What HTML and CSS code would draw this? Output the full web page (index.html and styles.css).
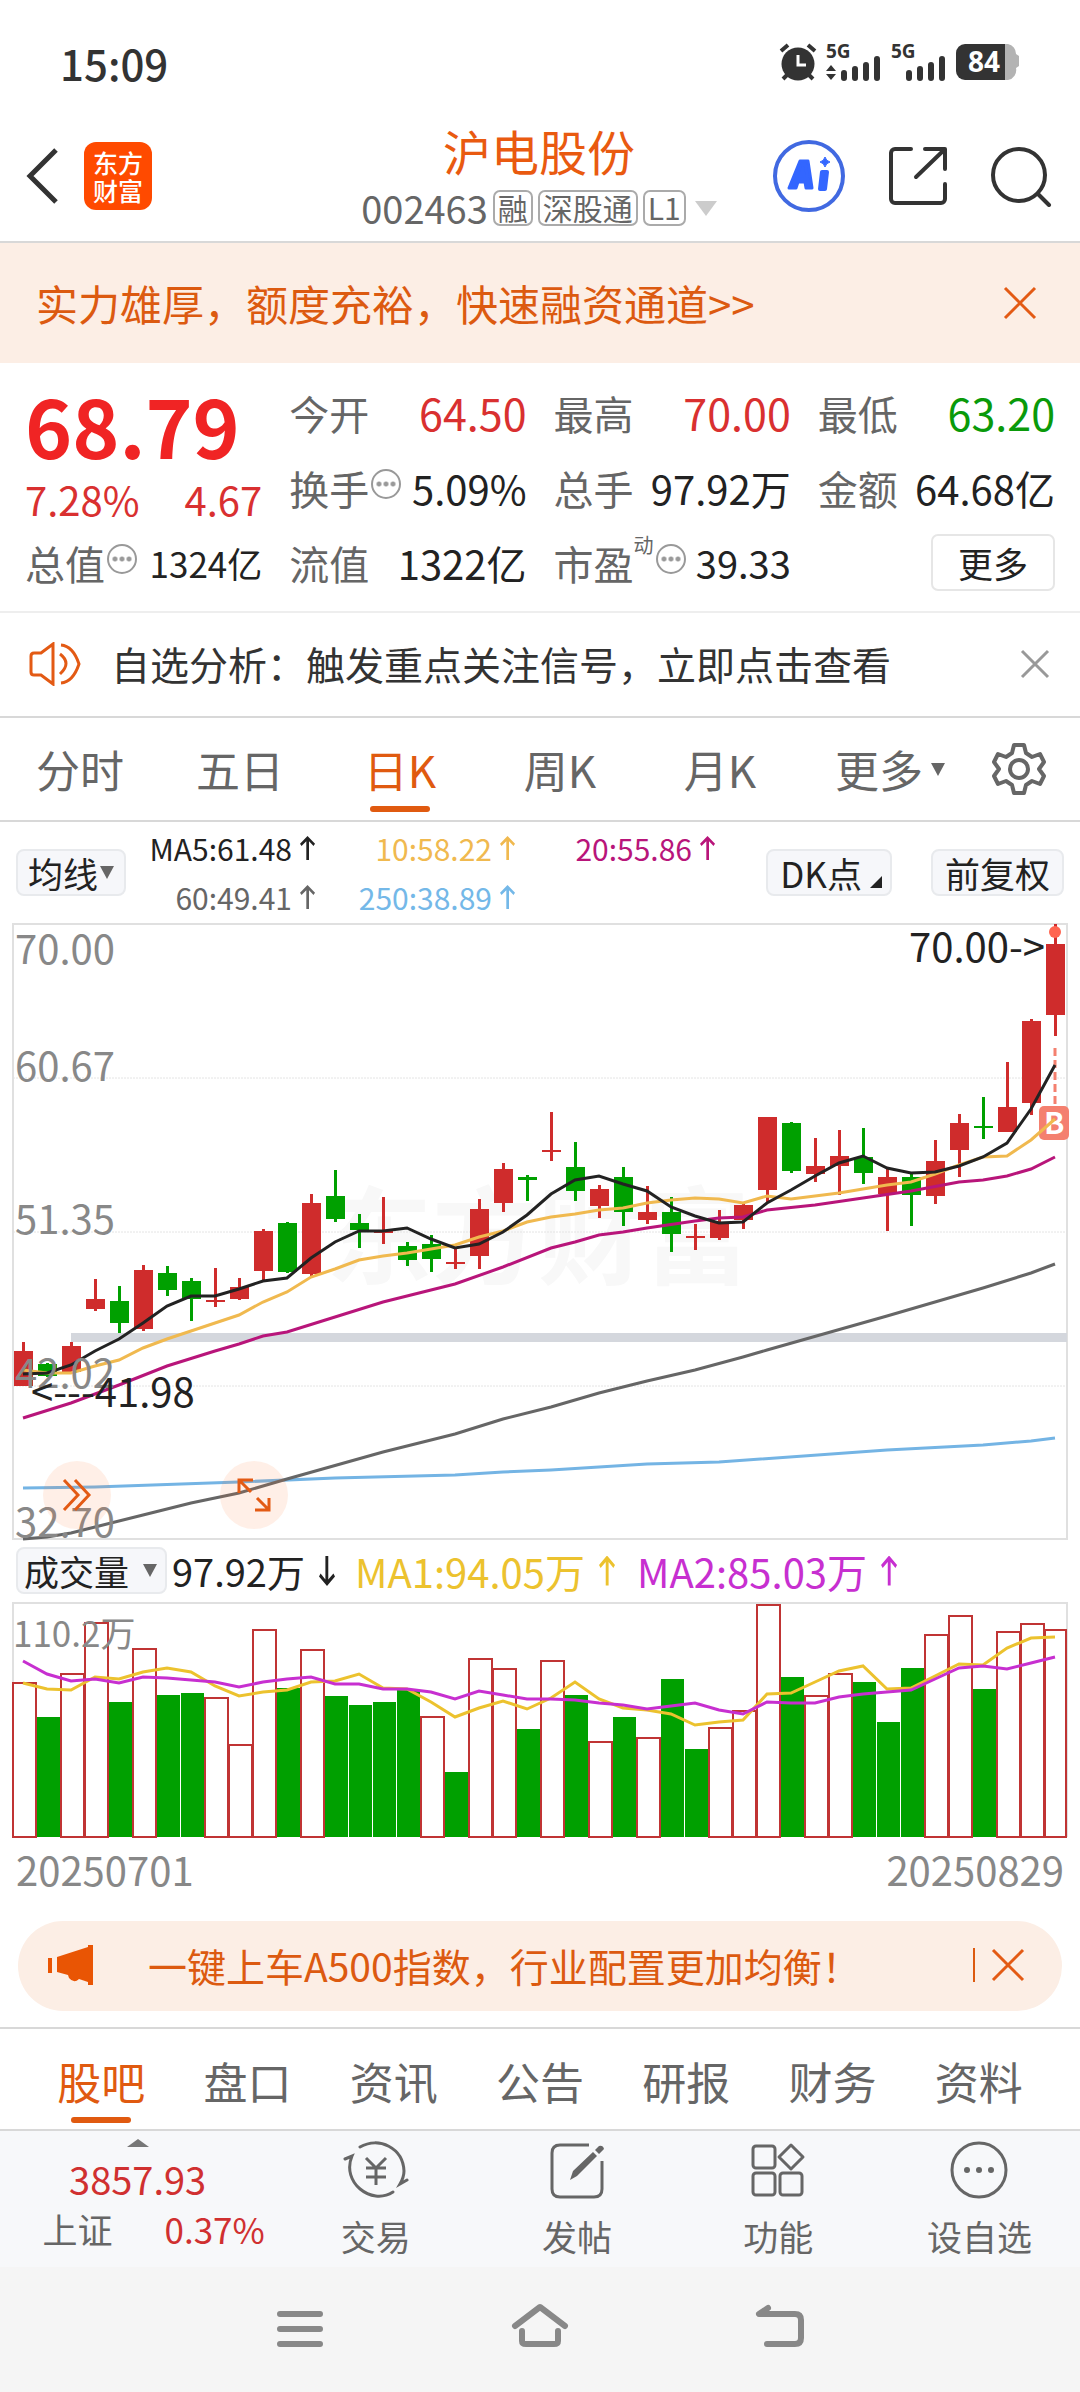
FILE: index.html
```html
<!DOCTYPE html>
<html lang="zh-CN">
<head>
<meta charset="utf-8">
<meta name="viewport" content="width=device-width, initial-scale=1">
<title>沪电股份 002463</title>
<link rel="stylesheet" href="styles.css">
</head>
<body>
<div class="status">
  <time class="clock">15:09</time>
  <svg class="status-icons" width="242" height="56" viewBox="0 -8 242 56" aria-label="闹钟 5G 5G 电量84">
    <g fill="#333">
      <circle cx="20" cy="21" r="16.500"/>
      <path d="M3 8l7-6M37 8l-7-6M5 36l5-5M35 36l-5-5" stroke="#333" stroke-width="4"/>
      <path d="M20 12v10h8" fill="none" stroke="#fff" stroke-width="3"/>
      <text class="net" x="48" y="15">5G</text>
      <path d="M48 28l5-6 5 6zM48 31l5 6 5-6z"/>
      <path d="M66 30v5M77 26v9M88 22v13M99 16v19M131 30v5M142 26v9M153 22v13M164 16v19" stroke="#333" stroke-width="6" stroke-linecap="round"/>
      <text class="net" x="113" y="15">5G</text>
      <path d="M227 1h3a10 10 0 0 1 8 10l3 2v10l-3 2a10 10 0 0 1-8 12h-3z" fill="#b3b3b3"/>
      <path d="M187 1h40v36h-40a9 9 0 0 1-9-9v-18a9 9 0 0 1 9-9z"/>
      <text class="charge" x="190" y="29">84</text>
    </g>
  </svg>
</div>

<header class="header">
  <div class="header-side">
    <button class="icon-btn" aria-label="返回"><svg width="34" height="58" viewBox="0 0 34 58"><path d="M30 3L4 29l26 26" fill="none" stroke="#333" stroke-width="5"/></svg></button>
    <a class="logo" href="#"><span>东方</span><span>财富</span></a>
  </div>
  <div class="title">
    <h1>沪电股份</h1>
    <button class="code">002463<span class="tag">融</span><span class="tag">深股通</span><span class="tag">L1</span><svg class="code-caret" width="22" height="15" viewBox="0 0 22 15"><path d="M0 0h22L11 15z" fill="#ccc"/></svg></button>
  </div>
  <div class="header-side header-actions">
    <button class="icon-btn" aria-label="Ai"><svg width="74" height="74" viewBox="0 0 74 74"><circle cx="37" cy="37" r="34" fill="none" stroke="#4169e1" stroke-width="4"/><g fill="#3366ff" stroke="#3366ff" stroke-linejoin="round"><path d="M28 22h8l4 27h-6l-1-6h-7l-2 6h-7zM31 29l-3 8h4z" fill-rule="evenodd" stroke-width="3"/><path d="M50 33h5l-2 17h-5z" stroke-width="4"/><path d="M53 18q1 4 5 5-4 1-5 5-1-4-5-5 4-1 5-5z" stroke-width="1"/></g></svg></button>
    <button class="icon-btn" aria-label="分享"><svg width="60" height="60" viewBox="0 0 60 60"><g fill="none" stroke="#333" stroke-width="4" stroke-linecap="round" stroke-linejoin="round"><path d="M23 3H7a4 4 0 0 0-4 4v46a4 4 0 0 0 4 4h46a4 4 0 0 0 4-4V38M37 3h20v20M56 4L28 31"/></g></svg></button>
    <button class="icon-btn" aria-label="搜索"><svg width="62" height="62" viewBox="0 0 62 62"><g fill="none" stroke="#333" stroke-width="4" stroke-linecap="round"><circle cx="29" cy="30" r="26"/><path d="M48 49l11 11"/></g></svg></button>
  </div>
</header>

<div class="banner">
  <a href="#">实力雄厚，额度充裕，快速融资通道&gt;&gt;</a>
  <button class="icon-btn" aria-label="关闭"><svg width="34" height="34" viewBox="0 0 34 34"><path d="M2 2l30 30M32 2L2 32" stroke="#e35a14" stroke-width="3"/></svg></button>
</div>

<section class="quote">
  <div class="price">
    <strong>68.79</strong>
    <div class="pair up"><span>7.28%</span><span>4.67</span></div>
  </div>
  <div class="pair"><span class="label">今开</span><span class="up big">64.50</span></div>
  <div class="pair"><span class="label">最高</span><span class="up big">70.00</span></div>
  <div class="pair"><span class="label">最低</span><span class="down big">63.20</span></div>
  <div class="pair"><span class="label">换手<i class="info"></i></span><span>5.09%</span></div>
  <div class="pair"><span class="label">总手</span><span>97.92万</span></div>
  <div class="pair"><span class="label">金额</span><span>64.68亿</span></div>
  <div class="pair"><span class="label">总值<i class="info"></i></span><span class="small">1324亿</span></div>
  <div class="pair"><span class="label">流值</span><span>1322亿</span></div>
  <div class="pair"><span class="label">市盈<sup>动</sup><i class="info"></i></span><span class="mid">39.33</span></div>
  <button class="more">更多</button>
</section>

<div class="notice">
  <svg width="54" height="44" viewBox="0 0 54 44"><g fill="none" stroke="#e35a14" stroke-width="3"><path d="M24 2v40L12 33H5q-3 0-3-3V14q0-3 3-3h7z"/><path d="M31 12q12 9 0 20M32 3q12 1 18 19-6 18-18 19"/></g></svg>
  <a href="#">自选分析：触发重点关注信号，立即点击查看</a>
  <button class="icon-btn" aria-label="关闭"><svg width="30" height="30" viewBox="0 0 30 30"><path d="M2 2l26 26M28 2L2 28" stroke="#999" stroke-width="3"/></svg></button>
</div>

<nav class="periods">
  <button>分时</button>
  <button>五日</button>
  <button class="active">日K</button>
  <button>周K</button>
  <button>月K</button>
  <button>更多<svg class="caret" width="14" height="13" viewBox="0 0 14 13"><path d="M0 0h14L7 13z"/></svg></button>
  <button aria-label="设置"><svg width="54" height="54" viewBox="0 0 54 54"><g fill="none" stroke="#666" stroke-width="4" stroke-linejoin="round"><path d="M22 3h10l2 8 6 4 8-3 4 8-5 7 5 7-4 8-8-3-6 4-2 8H22l-2-8-6-4-8 3-4-8 5-7-5-7 4-8 8 3 6-4z"/><circle cx="27" cy="27" r="9"/></g></svg></button>
</nav>

<section class="averages">
  <button class="chip">均线<svg class="caret" width="14" height="13" viewBox="0 0 14 13"><path d="M0 0h14L7 13z"/></svg></button>
  <div class="ma-list">
    <span class="ma5">MA5:61.48<i class="arrow"></i></span><span class="ma10">10:58.22<i class="arrow"></i></span><span class="ma20">20:55.86<i class="arrow"></i></span>
    <span class="ma60">60:49.41<i class="arrow"></i></span><span class="ma250">250:38.89<i class="arrow"></i></span>
  </div>
  <button class="chip">DK点<svg class="corner" width="12" height="12" viewBox="0 0 12 12"><path d="M12 0v12H0z" fill="#222"/></svg></button>
  <button class="chip">前复权</button>
</section>

<div class="chart">
  <svg id="kline" viewBox="0 923 1080 618" role="img" aria-label="日K线图"></svg>
  <button class="float-btn float-next" aria-label="展开"><svg width="30" height="34" viewBox="0 0 30 34"><path d="M2 2l14 15L2 32M13 2l14 15-14 15" fill="none" stroke="#e35a14" stroke-width="3"/></svg></button>
  <button class="float-btn float-full" aria-label="全屏"><svg width="34" height="34" viewBox="0 0 34 34"><path d="M2 15V2h14M2 2l12 12M32 20v12H18M32 32L20 20" fill="none" stroke="#e35a14" stroke-width="3"/></svg></button>
</div>

<div class="volume-head">
  <button class="chip chip-volume">成交量<svg class="caret" width="14" height="13" viewBox="0 0 14 13"><path d="M0 0h14L7 13z"/></svg></button>
  <span class="vol">97.92万<i class="arrow flip"></i></span>
  <span class="vma1">MA1:94.05万<i class="arrow"></i></span>
  <span class="vma2">MA2:85.03万<i class="arrow"></i></span>
</div>
<svg id="volume" class="volume-chart" viewBox="0 1602 1080 238" role="img" aria-label="成交量"></svg>
<div class="dates"><time>20250701</time><time>20250829</time></div>

<aside class="promo">
  <svg width="46" height="40" viewBox="0 0 46 40"><path d="M0 13h4v15H0zM9 12L40 2V0h5v40h-5v-3l-9-3q-5 5-10-1l-1-3-11-3z" fill="#e95504"/></svg>
  <a href="#">一键上车A500指数，行业配置更加均衡！</a>
  <button class="icon-btn promo-close" aria-label="关闭"><svg width="34" height="34" viewBox="0 0 34 34"><path d="M2 2l30 30M32 2L2 32" stroke="#e35a14" stroke-width="3"/></svg></button>
</aside>

<nav class="sections">
  <a class="active" href="#">股吧</a><a href="#">盘口</a><a href="#">资讯</a><a href="#">公告</a><a href="#">研报</a><a href="#">财务</a><a href="#">资料</a>
</nav>

<footer class="toolbar">
  <button class="index">
    <svg width="22" height="8" viewBox="0 0 22 8"><path d="M0 8L11 0l11 8z" fill="#777"/></svg>
    <span class="index-value">3857.93</span>
    <span class="index-row"><span class="index-name">上证</span><span>0.37%</span></span>
  </button>
  <button class="tool"><svg width="66" height="60" viewBox="0 0 66 60"><g fill="none" stroke="#666" stroke-width="3" stroke-linecap="round"><path d="M17 7C36-4 60 8 61 31q0 6-4 13l7-4M50 52C28 66-2 42 9 16L2 19"/><path d="M23 18l10 10 10-10M23 28h20M23 37h20M33 28v17" stroke-linecap="butt"/></g></svg>交易</button>
  <button class="tool"><svg width="60" height="60" viewBox="0 0 60 60"><path d="M42 5H13q-8 0-8 8v36q0 8 8 8h34q8 0 8-8V21" fill="none" stroke="#666" stroke-width="3"/><path d="M23 40l3-9 20-19 4 4-20 20zM48 10l4-4q4-1 5 3l-5 5z" fill="#666"/></svg>发帖</button>
  <button class="tool"><svg width="60" height="60" viewBox="0 0 60 60"><g fill="none" stroke="#666" stroke-width="3" stroke-linejoin="round"><rect x="5" y="6" width="22" height="22" rx="3"/><rect x="5" y="33" width="22" height="22" rx="3"/><rect x="32" y="33" width="22" height="22" rx="3"/><path d="M43 5l12 12-12 12-12-12z"/></g></svg>功能</button>
  <button class="tool"><svg width="60" height="60" viewBox="0 0 60 60"><circle cx="30" cy="30" r="27" fill="none" stroke="#666" stroke-width="3"/><g fill="#666"><circle cx="18" cy="30" r="3"/><circle cx="30" cy="30" r="3"/><circle cx="42" cy="30" r="3"/></g></svg>设自选</button>
</footer>

<nav class="system">
  <button aria-label="菜单"><svg width="60" height="50" viewBox="0 0 60 50"><path d="M10 13h40M10 28h40M10 43h40" stroke="#888" stroke-width="6" stroke-linecap="round"/></svg></button>
  <button aria-label="主页"><svg width="60" height="50" viewBox="0 0 60 50"><g fill="none" stroke="#888" stroke-width="6" stroke-linecap="round" stroke-linejoin="round"><path d="M5 25L30 6l25 19M12 30v10q0 3 4 3h28q4 0 4-3V30"/></g></svg></button>
  <button aria-label="返回"><svg width="60" height="50" viewBox="0 0 60 50"><path d="M18 7L9 13h36q6 0 6 6v18q0 6-6 6H17" fill="none" stroke="#888" stroke-width="6" stroke-linecap="round" stroke-linejoin="round"/></svg></button>
</nav>
<script src="chart.js"></script>
</body>
</html>
```
FILE: styles.css
```css
* { box-sizing: border-box; }
body {
  margin: 0;
  background: #fff;
  color: #222;
  font-family: "Noto Sans CJK SC", sans-serif;
  font-size: 40px;
  line-height: 1;
}
button {
  margin: 0;
  padding: 0;
  border: 0;
  background: none;
  color: inherit;
  font: inherit;
}
a { color: inherit; text-decoration: none; }
svg { display: block; flex: none; }
i { font-style: normal; }

.status {
  display: flex;
  justify-content: space-between;
  align-items: center;
  height: 130px;
  padding: 0 60px 4px 60px;
}
.clock { font-size: 42px; font-weight: 500; color: #333; }
.net { font-family: "Open Sans", sans-serif; font-size: 19px; font-weight: 700; }
.charge { font-family: "Open Sans", sans-serif; font-size: 28px; font-weight: 700; fill: #fff; }

.header {
  display: grid;
  grid-template-columns: 1fr auto 1fr;
  height: 113px;
  padding: 0 28px 0 26px;
  border-bottom: 2px solid #d8d8d8;
}
.header-side { display: flex; align-items: center; gap: 24px; height: 91px; }
.header-actions { justify-content: flex-end; gap: 42px; }
.logo {
  display: flex;
  flex-direction: column;
  justify-content: center;
  width: 68px;
  height: 68px;
  border-radius: 12px;
  background: #ff4a00;
  color: #fff;
  font-size: 25px;
  font-weight: 500;
  line-height: 28px;
  text-align: center;
}
.title { display: flex; flex-direction: column; align-items: center; }
.title h1 {
  margin: 0;
  color: #e95a10;
  font-size: 48px;
  font-weight: 400;
  line-height: 40px;
}
.code {
  display: flex;
  align-items: center;
  gap: 5px;
  height: 36px;
  margin-top: 20px;
  color: #666;
  font-size: 38px;
}
.tag {
  height: 36px;
  padding: 0 3px;
  border: 2px solid #aaa;
  border-radius: 7px;
  font-size: 30px;
  line-height: 31px;
}
.code-caret { margin-left: 4px; }

.banner {
  display: flex;
  justify-content: space-between;
  align-items: center;
  height: 120px;
  padding: 0 43px 0 36px;
  background: #fceee5;
  color: #dc5a10;
  font-size: 42px;
}

.quote {
  display: grid;
  grid-template-columns: repeat(4, 1fr);
  grid-auto-rows: 75px;
  column-gap: 27px;
  padding: 12px 25px 11px;
  border-bottom: 2px solid #eee;
}
.price { grid-row: span 2; }
.price strong {
  display: block;
  height: 98px;
  color: #f02424;
  font-size: 80px;
  font-weight: 700;
  line-height: 98px;
}
.price .pair { height: 52px; }
.pair { display: flex; justify-content: space-between; align-items: center; white-space: nowrap; }
.label { display: flex; align-items: center; color: #666; }
.label sup { align-self: flex-start; margin-top: -8px; font-size: 20px; line-height: 20px; }
.up { color: #d93030; }
.down { color: #0a9a0a; }
.big { font-size: 43px; }
.mid { font-size: 38px; }
.small { font-size: 35px; }
.info {
  width: 30px;
  height: 30px;
  margin: 0 0 8px 2px;
  border: 2px solid #999;
  border-radius: 50%;
  background: radial-gradient(circle, #999 2px, transparent 3px) center / 7px 26px repeat-x;
  background-clip: content-box;
  padding: 0 2px;
}
.more {
  place-self: center end;
  width: 124px;
  height: 57px;
  border: 2px solid #e6e6e6;
  border-radius: 7px;
  font-size: 35px;
}

.notice {
  display: flex;
  align-items: center;
  gap: 28px;
  height: 105px;
  padding: 0 30px 2px 29px;
  border-bottom: 2px solid #d8d8d8;
  color: #333;
  font-size: 39px;
}
.notice a { flex: 1; }

.periods {
  display: grid;
  grid-template-columns: repeat(5, 160fr) 180fr 78fr;
  height: 104px;
  padding-right: 22px;
  border-bottom: 2px solid #d8d8d8;
  color: #666;
  font-size: 44px;
}
.periods button, .sections a {
  position: relative;
  display: flex;
  justify-content: center;
  align-items: center;
}
.active { color: #e05a10; }
.active::after {
  content: "";
  position: absolute;
  bottom: 8px;
  left: calc(50% - 30px);
  width: 60px;
  height: 6px;
  border-radius: 3px;
  background: #e05a10;
}
.caret { margin-left: 8px; fill: #666; }
.chip .caret { margin-left: 2px; }

.averages {
  display: flex;
  align-items: center;
  height: 101px;
  padding: 0 16px;
}
.chip {
  display: flex;
  justify-content: center;
  align-items: center;
  height: 47px;
  padding: 0 10px;
  border: 2px solid #e8eaed;
  border-radius: 8px;
  background: #f6f7fa;
  font-size: 35px;
}
.averages .chip + .chip { margin-left: 39px; }
.averages .ma-list ~ .chip { padding: 0 12px; }
.corner { align-self: flex-end; margin: 0 -4px 6px 8px; }
.ma-list {
  display: grid;
  grid-template-columns: 189px 200px 200px;
  flex: 1;
  justify-items: end;
  font-size: 30px;
  line-height: 49px;
}
.ma-list span { display: flex; align-items: center; }
.arrow {
  width: 15px;
  height: 24px;
  margin-left: 8px;
  background: currentColor;
  clip-path: polygon(50% 0, 100% 32%, 90% 42%, 60% 22%, 60% 100%, 42% 100%, 42% 22%, 10% 42%, 0 32%);
}
.ma5 { color: #222; }
.ma10 { color: #f0b94f; }
.ma20 { color: #b8157a; }
.ma60 { color: #666; }
.ma250 { color: #74b8e8; }

.chart { position: relative; }
.chart > svg, .volume-chart { width: 100%; height: auto; overflow: visible; }
.chart text, .volume-chart text { font-size: 40px; fill: #888; }
.chart .mark { fill: #222; }
.chart .watermark { font-size: 106px; font-weight: 700; fill: #f8f8f8; }
.chart .badge { font-size: 30px; font-weight: 700; fill: #fff; }
.volume-chart .scale { font-size: 35px; }
.float-btn {
  position: absolute;
  top: 87%;
  display: flex;
  justify-content: center;
  align-items: center;
  width: 68px;
  height: 68px;
  border-radius: 50%;
  background: rgba(255, 120, 60, 0.12);
}
.float-next { left: 4%; }
.float-full { left: calc(20% + 4px); }

.volume-head {
  display: flex;
  align-items: center;
  height: 61px;
  padding: 0 16px 2px;
  font-size: 40px;
}
.volume-head span { display: flex; align-items: center; }
.chip-volume { padding: 0 8px 0 6px; gap: 12px; }
.arrow.flip { transform: rotate(180deg); }
.volume-head .arrow { width: 16px; height: 30px; margin-left: 14px; }
.volume-head .vol { margin-left: 5px; font-size: 38px; }
.vma1 { margin-left: 20px; color: #ecc22e; }
.vma2 { margin-left: 22px; color: #c72fd0; }

.dates {
  display: flex;
  justify-content: space-between;
  padding: 9px 16px 32px;
  color: #888;
}

.promo {
  display: flex;
  align-items: center;
  height: 90px;
  margin: 0 18px 16px;
  padding: 0 37px 2px 30px;
  border-radius: 45px;
  background: #fceee5;
  color: #dc5a10;
  font-size: 39px;
}
.promo a { flex: 1; margin-left: 54px; }
.promo-close { padding-left: 16px; border-left: 2px solid #dc5a10; }

.sections {
  display: grid;
  grid-template-columns: repeat(7, 1fr);
  height: 104px;
  padding: 0 28px;
  border-top: 2px solid #d8d8d8;
  border-bottom: 2px solid #d8d8d8;
  color: #666;
  font-size: 44px;
}
.sections a { padding-top: 3px; }
.sections .active::after { bottom: 6px; }

.toolbar {
  display: grid;
  grid-template-columns: 275fr repeat(4, 201fr);
  height: 136px;
  background: #f7f8fa;
  color: #666;
  font-size: 35px;
}
.tool { display: flex; flex-direction: column; align-items: center; gap: 18px; padding-top: 9px; }
.index { display: flex; flex-direction: column; align-items: center; gap: 13px; padding-top: 8px; color: #d03030; }
.index-value { font-size: 38px; }
.index-row { display: flex; gap: 52px; margin-left: 32px; }
.index-name { color: #666; }

.system {
  display: flex;
  justify-content: center;
  align-items: center;
  gap: 180px;
  height: 125px;
  padding-bottom: 8px;
  background: #f5f5f5;
}
```
FILE: chart.js
```javascript
// Each candle: direction, high, body top, body bottom, low (y positions).
const candles = [
  ['R',1342,1351,1386,1386],['G',1363,1364,1376,1377],['R',1342,1346,1372,1372],['R',1279,1299,1309,1311],
  ['G',1286,1301,1323,1333],['R',1265,1270,1329,1331],['G',1266,1273,1290,1296],['G',1278,1281,1299,1321],
  ['R',1268,1300,1302,1307],['R',1278,1287,1299,1300],['R',1229,1231,1271,1281],['G',1222,1223,1272,1273],
  ['R',1194,1203,1274,1276],['G',1170,1196,1219,1222],['G',1214,1223,1230,1248],['R',1197,1231,1233,1244],
  ['G',1242,1246,1260,1266],['G',1235,1244,1259,1272],['R',1248,1262,1264,1269],['R',1199,1209,1256,1269],
  ['R',1163,1169,1203,1212],['G',1175,1177,1180,1201],['R',1112,1150,1152,1161],['G',1142,1167,1191,1201],
  ['R',1185,1189,1206,1218],['G',1167,1177,1212,1226],['R',1186,1212,1220,1224],['G',1197,1212,1234,1252],
  ['R',1224,1236,1238,1250],['R',1210,1222,1238,1240],['R',1204,1205,1220,1229],['R',1117,1117,1190,1202],
  ['G',1122,1123,1171,1173],['R',1138,1166,1174,1182],['R',1130,1156,1166,1195],['G',1128,1157,1173,1184],
  ['R',1169,1177,1194,1231],['G',1174,1177,1195,1226],['R',1140,1161,1196,1204],['R',1114,1123,1150,1177],
  ['G',1097,1126,1128,1139],['R',1062,1107,1132,1132],['R',1019,1021,1103,1115],['R',924,944,1015,1036]
];

// Averages: [bar index, y] where points are sparse, plain y per bar otherwise.
const ma5 = [1374,1373,1365,1351,1339,1323,1306,1296,1296,1289,1281,1278,1258,1242,1231,1231,1228,1239,1248,1244,1232,1215,1194,1180,1176,1184,1191,1207,1216,1223,1222,1203,1190,1176,1163,1156,1168,1173,1172,1166,1157,1143,1109,1065];
const ma10 = [1370,1373,1373,1366,1360,1348,1339,1331,1323,1315,1302,1292,1277,1269,1260,1256,1253,1249,1245,1237,1231,1222,1217,1214,1210,1208,1203,1200,1198,1199,1203,1196,1199,1196,1193,1189,1185,1182,1174,1165,1157,1156,1140,1119];
const ma20 = [[0,1418],[2,1403],[4,1385],[6,1366],[8,1351],[9,1344],[10,1336],[11,1332],[13,1317],[15,1302],[17,1290],[18,1284],[20,1267],[22,1248],[23,1242],[24,1235],[25,1232],[26,1228],[28,1221],[29,1218],[30,1217],[31,1210],[33,1205],[35,1198],[37,1191],[39,1182],[40,1180],[41,1176],[42,1169],[43,1157]];
const ma60 = [[0,1539],[1,1537],[2,1533],[3,1527],[5,1515],[7,1503],[9,1493],[11,1479],[15,1452],[18,1434],[20,1419],[22,1407],[24,1393],[26,1381],[28,1370],[30,1357],[31,1350],[36,1316],[40,1288],[42,1273],[43,1264]];
const ma250 = [[0,1488],[3,1487],[9,1482],[13,1478],[18,1475],[20,1472],[22,1470],[26,1464],[29,1462],[36,1450],[40,1445],[42,1441],[43,1438]];

const volumes = [1682,1717,1673,1622,1702,1648,1695,1693,1697,1744,1629,1688,1649,1696,1705,1702,1690,1716,1772,1658,1668,1729,1660,1695,1741,1717,1737,1679,1749,1727,1710,1604,1677,1695,1673,1682,1722,1668,1634,1615,1689,1631,1623,1629];
// Bars filled green: days that closed below the day before.
const downDays = [1,4,6,7,11,13,14,15,16,18,21,23,25,27,28,32,35,36,37,40];
const vma1 = [1683,1689,1690,1677,1679,1672,1668,1672,1686,1696,1692,1690,1682,1681,1674,1688,1689,1702,1717,1708,1701,1709,1698,1682,1699,1708,1710,1714,1725,1722,1720,1694,1693,1682,1671,1666,1689,1688,1676,1664,1665,1648,1638,1637];
const vma2 = [1661,1674,1681,1679,1683,1677,1678,1680,1682,1687,1682,1679,1677,1684,1684,1689,1689,1692,1699,1691,1695,1699,1699,1700,1703,1705,1709,1706,1703,1710,1714,1702,1703,1703,1697,1694,1692,1690,1679,1668,1666,1669,1663,1657];

const centre = i => 23 + 24 * i;
const line = (data, colour) => {
  const points = data.map((d, i) => Array.isArray(d) ? centre(d[0]) + ',' + d[1] : centre(i) + ',' + d).join(' ');
  return `<polyline points="${points}" fill="none" stroke="${colour}" stroke-width="3"/>`;
};
const text = (x, y, value, name) => `<text x="${x}" y="${y}" class="${name || 'scale'}">${value}</text>`;

let k = text(326, 1276, '东方财富', 'watermark');
k += '<path d="M13 1078H1067M13 1232H1067M13 1386H1067" stroke="#e4e4e4" stroke-width="1" stroke-dasharray="2 1"/>';
k += '<rect x="13" y="924" width="1054" height="615" fill="none" stroke="#e0e0e0" stroke-width="2"/>';
k += '<rect x="71" y="1333" width="996" height="9" fill="#d4d7dd"/>';
candles.forEach(([dir, high, top, bottom, low], i) => {
  const colour = dir === 'R' ? '#cf2c2c' : '#00a000';
  k += `<rect x="${centre(i) - 1}" y="${high}" width="3" height="${low - high}" fill="${colour}"/>`;
  k += `<rect x="${centre(i) - 9}" y="${top}" width="19" height="${bottom - top}" fill="${colour}"/>`;
});
k += '<circle cx="1055" cy="932" r="6" fill="#ff6450"/><path d="M1055 1048v60" stroke="#f4806f" stroke-width="3" stroke-dasharray="8 4"/>';
k += '<rect x="1039" y="1106" width="30" height="34" rx="5" fill="#f4806f"/>' + text(1044, 1134, 'B', 'badge');
k += line(ma250, '#74b4e4') + line(ma60, '#666') + line(ma20, '#b8157a') + line(ma10, '#f0b94f') + line(ma5, '#222');
k += text(15, 964, '70.00') + text(15, 1081, '60.67') + text(15, 1234, '51.35') + text(15, 1388, '42.02') + text(15, 1537, '32.70');
k += text(909, 962, '70.00-&gt;', 'mark') + text(31, 1407, '&lt;---41.98', 'mark');
document.getElementById('kline').innerHTML = k;

let v = '<path d="M13 1837V1603H1067V1837" fill="none" stroke="#e0e0e0" stroke-width="2"/>';
volumes.forEach((top, i) => {
  const x = 12 + 24 * i;
  v += downDays.includes(i)
    ? `<rect x="${x + 1}" y="${top}" width="23" height="${1837 - top}" fill="#00a000"/>`
    : `<rect x="${x + 1}" y="${top + 1}" width="${i === 43 ? 21 : 23}" height="${1836 - top}" fill="#fff" stroke="#c03434" stroke-width="2"/>`;
});
v += text(13, 1647, '110.2万') + line(vma1, '#ecc22e') + line(vma2, '#c72fd0');
document.getElementById('volume').innerHTML = v;
```
